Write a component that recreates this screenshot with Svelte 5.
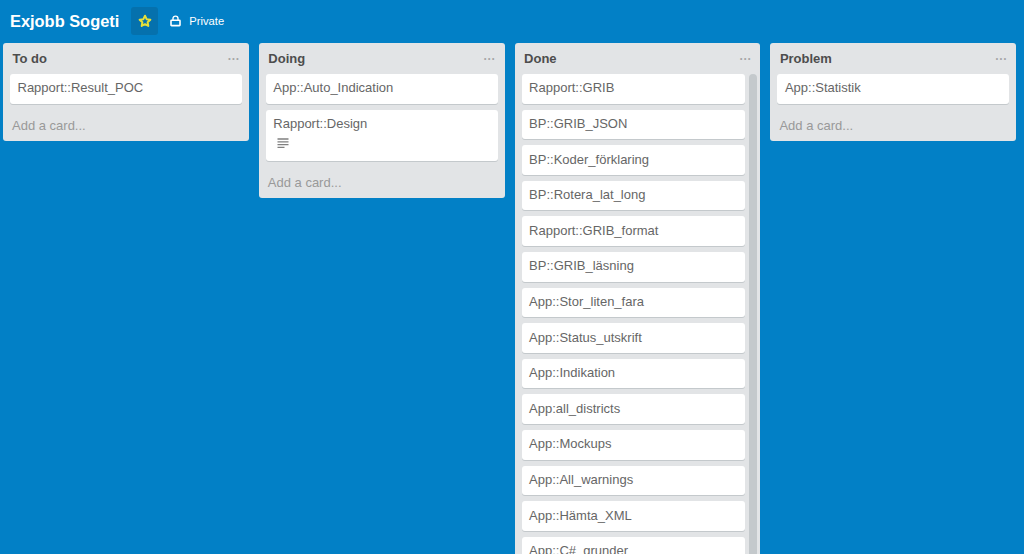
<script lang="ts">
	// Board data
	const lists = [
		{ name: 'To do', cards: [{ title: 'Rapport::Result_POC' }] },
		{
			name: 'Doing',
			cards: [{ title: 'App::Auto_Indication' }, { title: 'Rapport::Design', hasDescription: true }]
		},
		{
			name: 'Done',
			scrolling: true,
			cards: [
				'Rapport::GRIB',
				'BP::GRIB_JSON',
				'BP::Koder_förklaring',
				'BP::Rotera_lat_long',
				'Rapport::GRIB_format',
				'BP::GRIB_läsning',
				'App::Stor_liten_fara',
				'App::Status_utskrift',
				'App::Indikation',
				'App:all_districts',
				'App::Mockups',
				'App::All_warnings',
				'App::Hämta_XML',
				'App::C#_grunder'
			].map((title) => ({ title }))
		},
		{ name: 'Problem', cards: [{ title: 'App::Statistik' }] }
	];
</script>

<div class="board">
	<header class="board-header">
		<h1>Exjobb Sogeti</h1>
		<button class="star" aria-label="Star board">
			<svg width="14" height="14" viewBox="0 0 24 24">
				<path
					d="M12 3l2.8 5.9 6.4.8-4.7 4.4 1.2 6.4L12 17.4l-5.7 3.1 1.2-6.4-4.7-4.4 6.4-.8z"
					fill="none"
					stroke="#e6e03a"
					stroke-width="3.4"
					stroke-linejoin="round"
				/>
			</svg>
		</button>
		<span class="private">
			<svg width="11" height="12" viewBox="0 0 11 12">
				<path d="M3 5V3.6a2.5 2.5 0 0 1 5 0V5" fill="none" stroke="#fff" stroke-width="1.4" />
				<rect x="1" y="5.2" width="9" height="5.4" rx="0.6" fill="none" stroke="#fff" stroke-width="1.6" />
			</svg>
			Private
		</span>
	</header>

	<div class="lists">
		{#each lists as list}
			<section class="list" class:scrolling={list.scrolling}>
				<div class="list-header">
					<h2>{list.name}</h2>
					<span class="menu">···</span>
				</div>
				<div class="cards">
					{#each list.cards as card}
						<div class="card">
							<div class="card-title">{card.title}</div>
							{#if card.hasDescription}
								<svg class="desc" width="12" height="11" viewBox="0 0 12 11">
									<path d="M0.5 1h11M0.5 3.8h11M0.5 6.6h11M0.5 9.4h7" stroke="#808080" stroke-width="1.3" />
								</svg>
							{/if}
						</div>
					{/each}
				</div>
				{#if !list.scrolling}
					<div class="add-card">Add a card...</div>
				{/if}
			</section>
		{/each}
	</div>
</div>

<style>
	:global(body) {
		margin: 0;
		overflow: hidden;
	}

	.board {
		height: 554px;
		overflow: hidden;
		background: #0280c6;
		font-family: 'Liberation Sans', Arial, sans-serif;
		color: #666;
	}

	.board-header {
		display: flex;
		align-items: center;
		height: 43px;
		box-sizing: border-box;
		padding: 0 0 1px 10px;
	}

	h1 {
		margin: 0;
		font-size: 16.4px;
		font-weight: 700;
		color: #fff;
	}

	.star {
		display: flex;
		align-items: center;
		justify-content: center;
		width: 27px;
		height: 28px;
		margin-left: 12px;
		padding: 0;
		border: 0;
		border-radius: 3px;
		background: #0571ad;
	}

	.private {
		display: flex;
		align-items: center;
		gap: 8px;
		margin-left: 12px;
		font-size: 11.2px;
		color: #fff;
	}

	.lists {
		display: flex;
		gap: 10px;
		padding-left: 3px;
		align-items: flex-start;
	}

	.list {
		position: relative;
		box-sizing: border-box;
		width: 245.8px;
		flex: none;
		background: #e2e4e6;
		border-radius: 3px;
	}

	.list-header {
		display: flex;
		justify-content: space-between;
		align-items: center;
		height: 31px;
		padding: 0 9px 0 9.5px;
	}

	h2 {
		margin: 0;
		font-size: 13px;
		font-weight: 700;
		color: #4d4d4d;
	}

	.menu {
		font-size: 12px;
		font-weight: 700;
		color: #a6a6a6;
	}

	.cards {
		padding: 0 7px;
	}

	.scrolling .cards {
		padding-right: 15px;
	}

	/* Scrollbar thumb, runs off the bottom of the page */
	.scrolling::after {
		content: '';
		position: absolute;
		top: 31px;
		right: 3px;
		bottom: 0;
		width: 8px;
		border-radius: 4px;
		background: #c4c9cc;
	}

	.card {
		box-sizing: border-box;
		min-height: 29.6px;
		margin-bottom: 6px;
		padding: 5.4px 7.5px 2px;
		background: #fff;
		border-radius: 3px;
		box-shadow: 0 1px 0 #c4c9cc;
		font-size: 13px;
	}

	.card-title {
		line-height: 18px;
		margin-bottom: 4.2px;
	}

	.desc {
		display: block;
		margin: 5px 0 10px 4px;
	}

	.add-card {
		height: 31px;
		padding: 7px 9px 0;
		box-sizing: border-box;
		font-size: 13px;
		line-height: 18px;
		color: #999;
	}
</style>
